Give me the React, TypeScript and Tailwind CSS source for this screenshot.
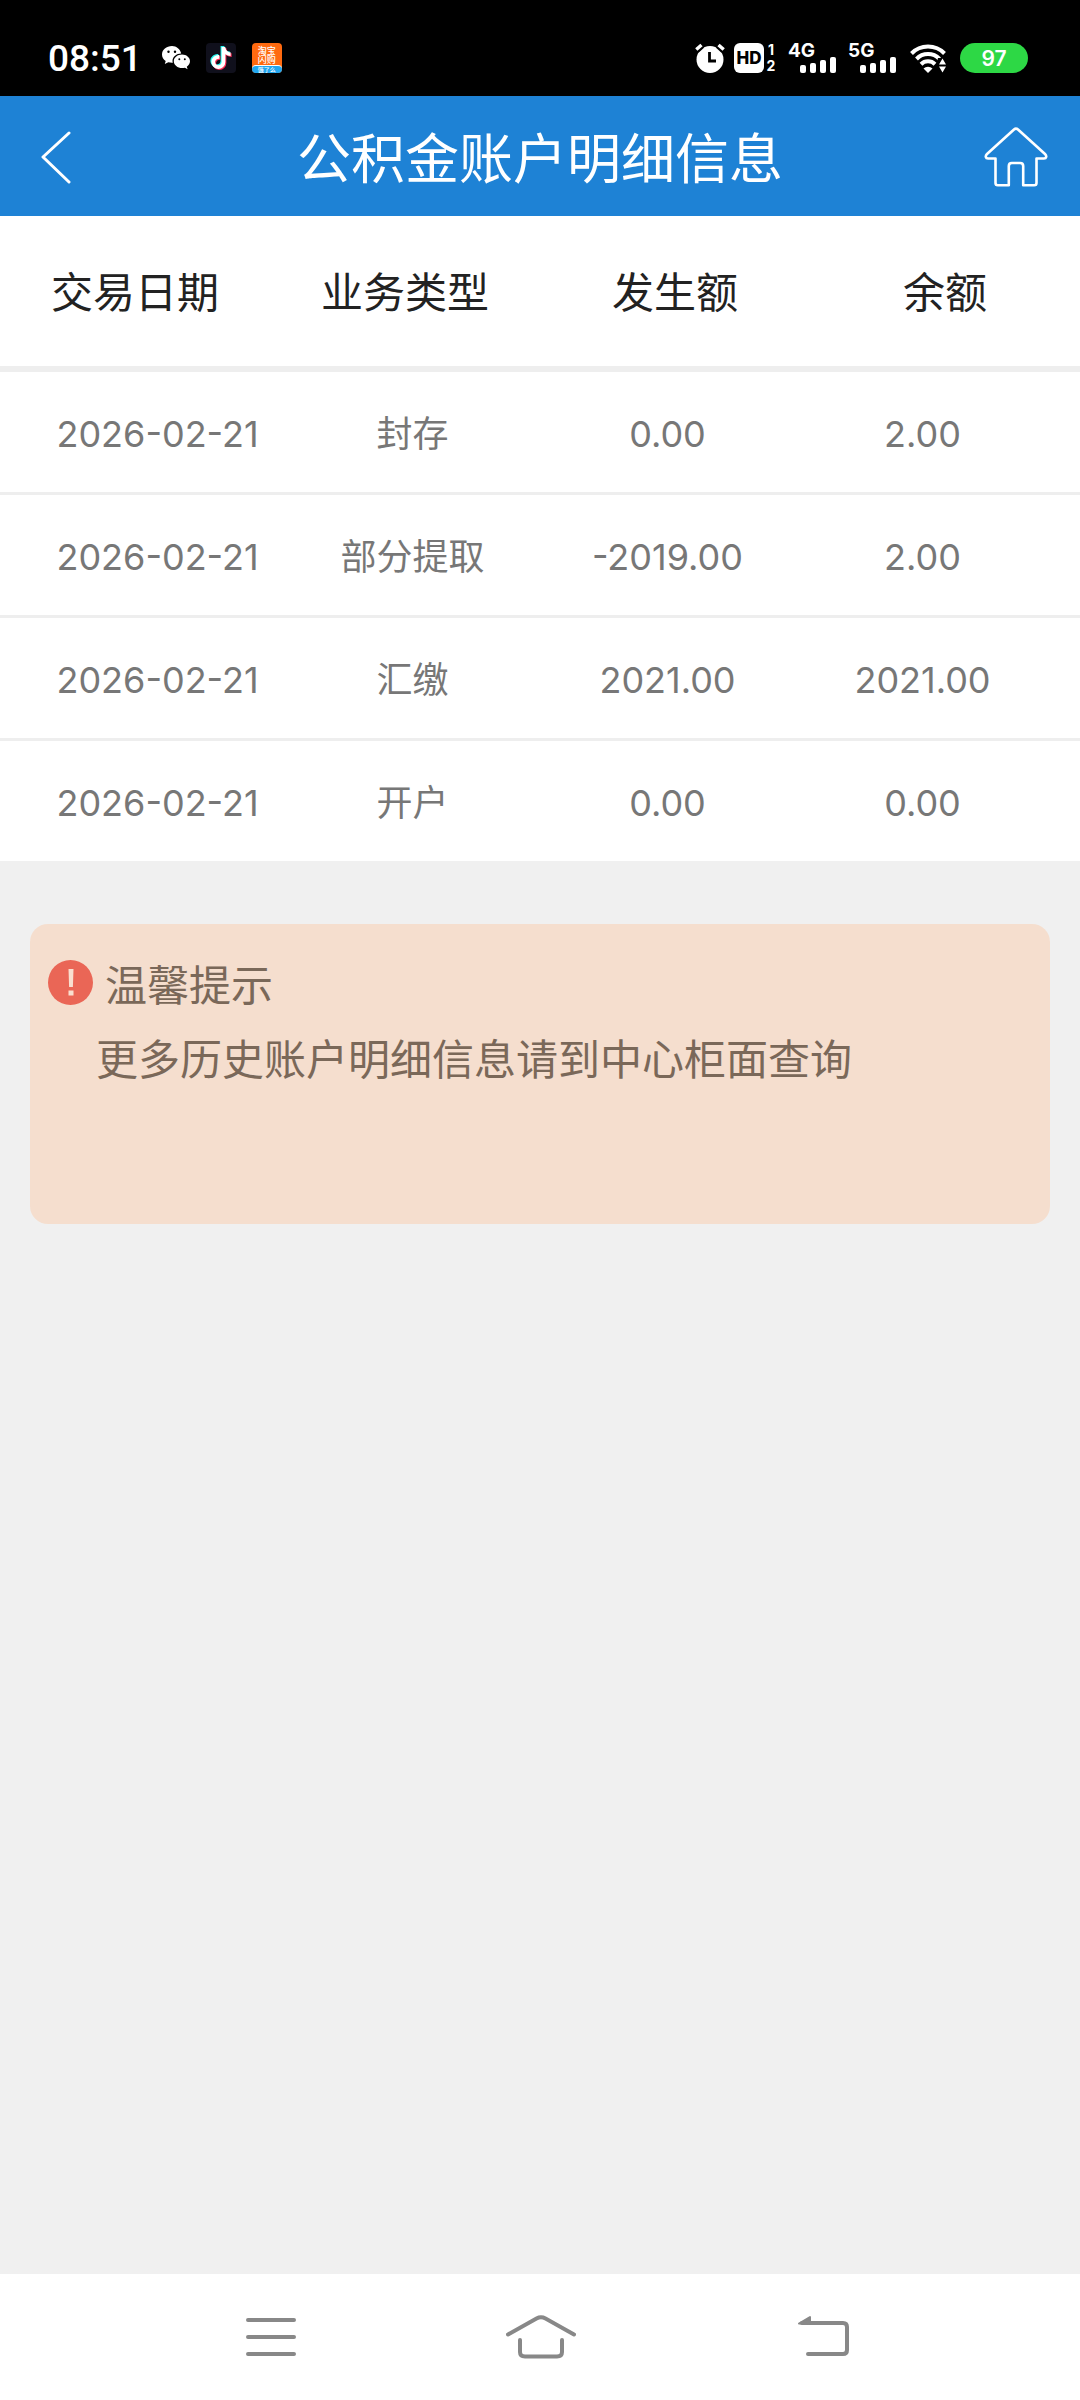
import { FaTiktok } from "react-icons/fa6";

type Transaction = {
  date: string;
  type: string;
  amount: string;
  balance: string;
};

const columns = ["交易日期", "业务类型", "发生额", "余额"];

const transactions: Transaction[] = [
  { date: "2026-02-21", type: "封存", amount: "0.00", balance: "2.00" },
  { date: "2026-02-21", type: "部分提取", amount: "-2019.00", balance: "2.00" },
  { date: "2026-02-21", type: "汇缴", amount: "2021.00", balance: "2021.00" },
  { date: "2026-02-21", type: "开户", amount: "0.00", balance: "0.00" },
];

export default function App() {
  return (
    <div className="flex min-h-screen flex-col bg-[#f0f0f0] font-['Inter','Noto_Sans_CJK_SC',sans-serif]">
      <StatusBar />
      <PageHeader />
      <main className="flex-1">
        <TransactionTable />
        <Notice />
      </main>
      <SystemNav />
    </div>
  );
}

/* --------------------- Status Bar --------------------- */
const StatusBar = () => (
  <div className="flex h-24 items-center justify-between bg-black pt-5 pr-[52px] pl-12 text-white">
    <div className="flex items-center">
      <span className="mr-5 font-['Roboto',sans-serif] text-[37px] leading-none font-medium">08:51</span>
      <WechatIcon />
      <span className="ml-4 flex size-[30px] items-center justify-center rounded bg-[#10101c]">
        <TiktokIcon />
      </span>
      <span className="ml-4 flex size-[30px] flex-col overflow-hidden rounded bg-[#ff6a10] text-center font-medium">
        <span className="pt-[3px] text-[9px] leading-[9px]">
          淘宝
          <br />
          闪购
        </span>
        <span className="mt-px flex-1 rounded-t-sm border-t border-white bg-[#22a7f0] text-[6px] leading-[7px]">饿了么</span>
      </span>
    </div>

    <div className="flex items-center">
      <AlarmIcon />
      <span className="ml-[9px] flex size-[30px] items-center justify-center rounded-md bg-white text-[17px] leading-none font-extrabold text-black">
        HD
      </span>
      <span className="ml-0.5 flex w-2.5 flex-col text-center text-[14px] leading-4 font-bold">
        <span>1</span>
        <span>2</span>
      </span>
      <Signal label="4G" />
      <Signal label="5G" />
      <WifiIcon />
      <span className="ml-3.5 flex h-[30px] w-[68px] items-center justify-center rounded-full bg-[#2dd845] text-[21px] leading-none font-semibold">
        97
      </span>
    </div>
  </div>
);

const WechatIcon = () => (
  <svg width="28" height="24" viewBox="0 0 28 24">
    <path
      fill="#fff"
      d="M10 0C4.4 0 0 3.700 0 8.400c0 2.700 1.400 5 3.700 6.500L2.800 18l3.500-1.800c1.200.3 2.400.5 3.700.5h.8A7.300 7.300 0 0 1 10.500 15c0-4.200 4-7.400 8.700-7.400C18.300 3.200 14.500 0 10 0Z"
    />
    <path
      fill="#fff"
      d="M28 15.300c0-3.800-3.700-6.700-8-6.700s-8.200 2.900-8.200 6.700 3.800 6.800 8.200 6.800c1 0 2-.2 2.900-.4l2.700 1.500-.8-2.500c2-1.300 3.200-3.200 3.200-5.400Z"
    />
    <g fill="#000">
      <circle cx="6.500" cy="5.800" r="1.200" />
      <circle cx="13" cy="5.800" r="1.200" />
      <circle cx="17.300" cy="13.200" r="1" />
      <circle cx="22.800" cy="13.200" r="1" />
    </g>
  </svg>
);

const TiktokIcon = () => (
  <span className="relative block size-[22px]">
    <FaTiktok className="absolute -top-px -left-px size-[22px] text-[#25f4ee]" />
    <FaTiktok className="absolute top-px left-px size-[22px] text-[#fe2c55]" />
    <FaTiktok className="absolute inset-0 size-[22px] text-white" />
  </span>
);

const AlarmIcon = () => (
  <svg width="30" height="30" viewBox="0 0 30 30">
    <circle cx="15" cy="16.500" r="13.500" fill="#fff" />
    <path d="M1.500 7.500 7 2.500M28.500 7.500 23 2.500" stroke="#000" strokeWidth="6" fill="none" />
    <path d="M1.300 6.500 6.500 2M28.700 6.500 23.500 2" stroke="#fff" strokeWidth="3.400" fill="none" />
    <path d="M14.500 9v9H21" stroke="#000" strokeWidth="2.800" fill="none" />
  </svg>
);

const Signal = ({ label }: { label: string }) => (
  <span className="relative ml-3 block h-[30px] w-12">
    <span className="absolute top-0 left-0 text-[19px] leading-4 font-bold">{label}</span>
    <svg className="ml-3" width="36" height="30" viewBox="0 0 36 30" fill="#fff">
      <rect x="0" y="22" width="6" height="8" rx="2" />
      <rect x="10" y="20" width="6" height="10" rx="2" />
      <rect x="20" y="17" width="6" height="13" rx="2" />
      <rect x="30" y="14" width="6" height="16" rx="2" />
    </svg>
  </span>
);

const WifiIcon = () => (
  <svg className="ml-3.5" width="36" height="30" viewBox="0 0 36 30" fill="none">
    <g stroke="#fff" strokeWidth="4">
      <path d="M1.500 10.500a23 23 0 0 1 33 0" />
      <path d="M6.500 16a16 16 0 0 1 23 0" />
      <path d="M11 21.200a10 10 0 0 1 14 0" />
    </g>
    <path d="M13.500 25.500a6.500 6.500 0 0 1 9 0L18 30Z" fill="#fff" />
    <path d="M28 15h8v15h-8l-2-7Z" fill="#000" />
    <path d="m32.500 15.500 3.500 6h-7ZM32.500 29.500l3.500-6h-7Z" fill="#fff" />
  </svg>
);

/* --------------------- Page Header --------------------- */
const PageHeader = () => (
  <header className="flex h-[120px] items-center justify-between bg-[#1e82d5] pt-0.5 pr-8 pl-10 text-white">
    <button type="button" aria-label="返回" className="w-14">
      <svg width="32" height="54" viewBox="0 0 32 54" fill="none" stroke="#fff" strokeWidth="3" strokeLinecap="round" strokeLinejoin="round">
        <path d="M29 3 3 27l26 25" />
      </svg>
    </button>
    <h1 className="pt-1.5 text-[54px] leading-none font-normal">公积金账户明细信息</h1>
    <a href="#home" aria-label="首页">
      <svg width="64" height="60" viewBox="0 0 64 60" fill="none" stroke="#fff" strokeWidth="2.600" strokeLinejoin="round">
        <path d="M30 2.500 3 27c-2 2-1.500 4.500 1 4.500h7.500V56c0 1.500.8 2.300 2.300 2.300h11V39c0-2 1-3 3-3h8.400c2 0 3 1 3 3v19.300h11c1.500 0 2.300-.8 2.300-2.300V31.500H60c2.500 0 3-2.500 1-4.500L34 2.500c-1.500-1.300-2.500-1.300-4 0Z" />
      </svg>
    </a>
  </header>
);

/* --------------------- Transaction Table --------------------- */
const TransactionTable = () => (
  <table className="block bg-white text-center">
    <thead className="block border-b-6 border-[#eee]">
      <tr className="grid h-[150px] grid-cols-4 items-center pt-1 text-[42px] leading-none text-[#222]">
        {columns.map((column) => (
          <th key={column} className="font-normal">
            {column}
          </th>
        ))}
      </tr>
    </thead>
    <tbody className="block divide-y-3 divide-[#eee] text-[36px] leading-none text-[#777]">
      {transactions.map((item) => (
        <tr key={item.type} className="grid grid-cols-4 items-center px-[30px] pt-11 pb-10">
          <td>{item.date}</td>
          <td>{item.type}</td>
          <td>{item.amount}</td>
          <td>{item.balance}</td>
        </tr>
      ))}
    </tbody>
  </table>
);

/* --------------------- Notice --------------------- */
const Notice = () => (
  <section className="mx-[30px] mt-[63px] min-h-[300px] rounded-[18px] bg-[#f5dece] px-[18px] pt-9 text-[42px] text-[#7a6859]">
    <div className="flex items-start gap-3">
      <svg width="45" height="45" viewBox="0 0 45 45">
        <circle cx="22.500" cy="22.500" r="22.500" fill="#ea6656" />
        <path d="M20.500 9h5l-.6 18h-3.800ZM20.500 30.500h5v5h-5Z" fill="#f9dfd0" />
      </svg>
      <h2 className="leading-[52px]">温馨提示</h2>
    </div>
    <p className="mt-[18px] pl-12 leading-[60px]">更多历史账户明细信息请到中心柜面查询</p>
  </section>
);

/* --------------------- System Navigation --------------------- */
const SystemNav = () => (
  <nav className="grid h-[126px] grid-cols-3 items-center justify-items-center bg-white pr-[134px] pl-[136px]">
    <button type="button" aria-label="最近任务">
      <svg width="50" height="44" viewBox="0 0 50 44" stroke="#888" strokeWidth="4" strokeLinecap="round">
        <path d="M2 5h46M2 22h46M2 39h46" />
      </svg>
    </button>
    <button type="button" aria-label="主屏幕">
      <svg width="70" height="44" viewBox="0 0 70 44" fill="none" stroke="#888" strokeWidth="4" strokeLinecap="round">
        <path d="M2 19.500 30.500 3.500q4.500-2.400 9 0L68 19.500M14 25v12q0 4.500 5 4.500h32q5 0 5-4.500V25" />
      </svg>
    </button>
    <button type="button" aria-label="返回上一级">
      <svg width="78" height="44" viewBox="0 0 78 44" fill="none" stroke="#888" strokeWidth="4" strokeLinecap="round">
        <path d="M30 8h41q4 0 4 4v23q0 4-4 4H36" />
        <path d="M27 8.500 38 2v7Z" fill="#888" strokeWidth="2" strokeLinejoin="round" />
      </svg>
    </button>
  </nav>
);
